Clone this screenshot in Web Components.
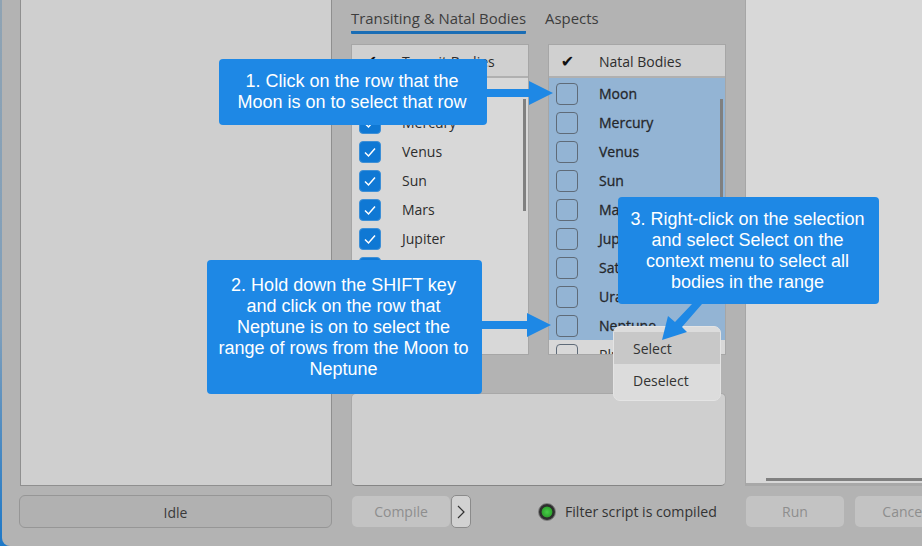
<!DOCTYPE html>
<html>
<head>
<meta charset="utf-8">
<style>
    html, body { margin: 0; height: 100%; overflow: hidden; background: #1d6fc0; }
    body { font: 14px "Open Sans", "Liberation Sans", sans-serif; color: #333; }
</style>
</head>
<body>
<app-window>
    <side-panel slot="left"></side-panel>
    <status-button slot="left">Idle</status-button>

    <tab-strip slot="middle" active="Transiting &amp; Natal Bodies" other="Aspects"></tab-strip>
    <body-list slot="middle" title="Transit Bodies" checked selected="0"></body-list>
    <body-list slot="middle" title="Natal Bodies" selected="9" second></body-list>
    <script-box slot="middle"></script-box>
    <flat-button slot="middle">Compile</flat-button>
    <chevron-button slot="middle"></chevron-button>
    <status-led slot="middle">Filter script is compiled</status-led>

    <side-panel slot="right" bar></side-panel>
    <flat-button slot="right">Run</flat-button>
    <flat-button slot="right">Cancel</flat-button>

    <context-menu slot="overlay" style="left:613px;top:326px"></context-menu>
    <call-out slot="overlay" style="left:219px;top:59px;width:268px;height:66px">1. Click on the row that the<br>Moon is on to select that row</call-out>
    <call-out slot="overlay" style="left:207px;top:260px;width:275px;height:134px">2. Hold down the SHIFT key<br>and click on the row that<br>Neptune is on to select the<br>range of rows from the Moon to<br>Neptune</call-out>
    <call-out slot="overlay" style="left:618px;top:197px;width:261px;height:107px">3. Right-click on the selection<br>and select Select on the<br>context menu to select all<br>bodies in the range</call-out>
    <arrow-layer slot="overlay"></arrow-layer>
</app-window>

<script>
const BODIES = ['Moon', 'Mercury', 'Venus', 'Sun', 'Mars', 'Jupiter', 'Saturn', 'Uranus', 'Neptune', 'Pluto'];

// small helper so each element only has to give its markup
class ShadowElement extends HTMLElement {
    constructor(markup) {
        super();
        this.attachShadow({ mode: 'open' });
        this.shadowRoot.innerHTML = markup;
    }
}

class AppWindow extends ShadowElement {
    constructor() {
        super(`
        <style>
        :host { display: block; position: relative; height: 546px; overflow: hidden;
                background: linear-gradient(#8fa3b3 0, #7f9fbb 60%, #1d78c8 100%); }
        .window { height: 100%; margin-left: 2px; background: #b3b3b3; border-bottom-left-radius: 8px; overflow: hidden; }
        .grid { display: grid; grid-template-columns: 312px 375px 300px; column-gap: 19px; height: 100%;
                padding-left: 18px; box-sizing: border-box; }
        .left { display: grid; grid-template-rows: 486px 33px; row-gap: 9px; align-content: start; }
        </style>
        <div class="window">
            <div class="grid">
                <div class="left"><slot name="left"></slot></div>
                <middle-column><slot name="middle"></slot></middle-column>
                <right-column><slot name="right"></slot></right-column>
            </div>
        </div>
        <slot name="overlay"></slot>`);
    }
}

class MiddleColumn extends ShadowElement {
    constructor() {
        super(`
        <style>
        :host { display: grid; grid-template-columns: 178px 19px 178px; grid-template-rows: 44px 311px 38px 93px 9px 33px;
                width: 375px; align-content: start; }
        </style>
        <slot></slot>`);
    }
}

class RightColumn extends ShadowElement {
    constructor() {
        super(`
        <style>
        :host { display: flex; flex-wrap: wrap; align-content: flex-start; column-gap: 10px; row-gap: 10px; width: 300px; }
        </style>
        <slot></slot>`);
    }
}

class SidePanel extends ShadowElement {
    constructor() {
        super(`
        <style>
        :host { display: block; position: relative; height: 486px; box-sizing: border-box; background: #cfcfcf;
                border: 1px solid #8f8f8f; border-top: 0; }
        :host([slot=right]) { flex-basis: 100%; background: #d8d8d8; border: 0; border-left: 1px solid #a6a6a6;
                border-bottom: 3px solid #a8a8a8; }
        .bar { position: absolute; left: 20px; right: 0; bottom: 2px; height: 3px; background: #808080; }
        </style>
        <div class="bar" hidden></div>`);
    }
    connectedCallback() {
        if (this.hasAttribute('bar')) this.shadowRoot.querySelector('.bar').hidden = false;
    }
}

class StatusButton extends ShadowElement {
    constructor() {
        super(`
        <style>
        :host { display: flex; align-items: center; justify-content: center; height: 33px; margin-left: -1px; box-sizing: border-box;
                padding-top: 1px; border: 1px solid #969696; border-radius: 6px; background: #b1b1b1; color: #3a3a3a; }
        </style>
        <slot></slot>`);
    }
}

class TabStrip extends ShadowElement {
    constructor() {
        super(`
        <style>
        :host { display: flex; grid-column: 1 / -1; gap: 19px; height: 44px; box-sizing: border-box; align-items: flex-start;
                color: #3d3d3d; font-size: 14.9px; }
        .tab { height: 34px; line-height: 37px; white-space: nowrap; box-sizing: border-box; }
        .on { border-bottom: 3px solid #1a6db5; border-radius: 1px; }
        </style>
        <div class="tab on"></div><div class="tab off"></div>`);
    }
    connectedCallback() {
        this.shadowRoot.querySelector('.on').textContent = this.getAttribute('active');
        this.shadowRoot.querySelector('.off').textContent = this.getAttribute('other');
    }
}

class BodyList extends ShadowElement {
    constructor() {
        super(`
        <style>
        :host { display: flex; flex-direction: column; position: relative; width: 178px; height: 311px; box-sizing: border-box;
                border: 1px solid #a6a6a6; background: #d8d8d8; overflow: hidden; color: #2d2d2d; }
        :host([second]) { grid-column: 3; }
        .head { display: flex; align-items: center; flex: 0 0 33px; padding-top: 1px; background: #d0d0d0; border-bottom: 2px solid #b0b0b0; box-sizing: border-box; height: 33px; }
        .tick { width: 37px; margin-right: 13px; text-align: center; font: 16px "DejaVu Sans", sans-serif; color: #111; }
        .row { display: flex; align-items: center; height: 29px; padding-left: 7px; box-sizing: border-box; }
        .row:first-child { height: 30px; padding-top: 1px; }
        .row.sel { background: #93b4d4; -webkit-text-stroke: 0.3px #25272b; color: #25272b; }
        .box { flex: none; width: 22px; height: 22px; box-sizing: border-box; border-radius: 4px; margin-right: 21px;
               border: 1.5px solid #5f6b78; display: flex; align-items: center; justify-content: center; }
        .box.on { background: #0f78d4; border: 1px solid #3d8fd6; }
        .sb { position: absolute; right: 2px; top: 54px; width: 3px; height: 112px; background: #808080; }
        </style>
        <div class="head"><div class="tick">&#10004;</div><div class="ttl"></div></div>
        <div class="rows"></div>
        <div class="sb"></div>`);
    }
    connectedCallback() {
        this.shadowRoot.querySelector('.ttl').textContent = this.getAttribute('title');
        const checked = this.hasAttribute('checked');
        const selected = Number(this.getAttribute('selected'));
        const tick = '<svg width="14" height="12" viewBox="0 0 14 12"><path d="M2 6.5 5.5 10 12 2.5" fill="none" stroke="#fff" stroke-width="1.5"/></svg>';
        this.shadowRoot.querySelector('.rows').innerHTML = BODIES.map((name, i) => `
            <div class="row ${i < selected ? 'sel' : ''}">
                <div class="box ${checked ? 'on' : ''}">${checked ? tick : ''}</div>${name}
            </div>`).join('');
    }
}

class ScriptBox extends ShadowElement {
    constructor() {
        super(`
        <style>
        :host { display: block; grid-column: 1 / -1; grid-row: 4; box-sizing: border-box; background: #cfcfcf;
                border: 1px solid #a8a8a8; border-bottom-color: #858585; border-radius: 5px; }
        </style>`);
    }
}

class FlatButton extends ShadowElement {
    constructor() {
        super(`
        <style>
        :host { display: flex; align-items: center; justify-content: center; width: 98px; height: 31px; box-sizing: border-box;
                background: #c3c3c3; color: #8e8e8e; border-radius: 5px; margin-left: 1px; }
        :host([slot=middle]) { grid-row: 6; grid-column: 1; margin-top: 1px; }
        </style>
        <slot></slot>`);
    }
}

class ChevronButton extends ShadowElement {
    constructor() {
        super(`
        <style>
        :host { display: flex; align-items: center; justify-content: center; grid-row: 6; grid-column: 1; justify-self: start;
                margin-left: 100px; width: 20px; height: 33px; box-sizing: border-box; background: #d2d2d2;
                border: 1px solid #8b8b8b; border-radius: 5px; }
        </style>
        <svg width="8" height="14" viewBox="0 0 8 14"><path d="M1 1 7 7 1 13" fill="none" stroke="#333" stroke-width="1.2"/></svg>`);
    }
}

class StatusLed extends ShadowElement {
    constructor() {
        super(`
        <style>
        :host { display: flex; align-items: center; grid-row: 6; grid-column: 2 / -1; margin-left: 9px; gap: 9px; color: #333;
                white-space: nowrap; font-size: 14.15px; }
        .led { width: 18px; height: 18px; box-sizing: border-box; border-radius: 50%; border: 1.5px solid #7d7d7d;
               background: radial-gradient(circle 8px at 50% 50%, #47cf47 0, #2fa32f 5px, #2b2b2b 5.8px, #333 8px); }
        </style>
        <div class="led"></div><slot></slot>`);
    }
}

class ContextMenu extends ShadowElement {
    constructor() {
        super(`
        <style>
        :host { display: block; position: absolute; width: 108px; height: 75px; box-sizing: border-box; padding-top: 5px;
                background: #dcdcdc; border: 1px solid #e4e4e4; border-radius: 7px; color: #333; }
        .item { height: 32px; line-height: 33px; padding-left: 19px; }
        .hot { background: #c8c8c8; }
        </style>
        <div class="item hot">Select</div><div class="item">Deselect</div>`);
    }
}

class CallOut extends ShadowElement {
    constructor() {
        super(`
        <style>
        :host { display: flex; align-items: center; justify-content: center; position: absolute; box-sizing: border-box; text-align: center;
                padding-right: 2px; background: #1e88e5; color: #fff; border-radius: 4px;
                font: 18px/21px "Liberation Sans", Arial, sans-serif; white-space: nowrap; }
        </style>
        <div><slot></slot></div>`);
    }
}

// the three arrows run across the other panels, so they get their own layer
class ArrowLayer extends ShadowElement {
    constructor() {
        super(`
        <style>
        :host { display: block; position: absolute; left: 0; top: 0; pointer-events: none; }
        svg { display: block; }
        </style>
        <svg width="922" height="546" viewBox="0 0 922 546" fill="#1e88e5">
            <path d="M487 89H529V81L553 93 529 105V97H487Z"/>
            <path d="M482 321H527V313L551 325 527 337V329H482Z"/>
            <path d="M692 304H702L682 327 687 332 662 340 668 316 675 322Z"/>
        </svg>`);
    }
}

customElements.define('app-window', AppWindow);
customElements.define('middle-column', MiddleColumn);
customElements.define('right-column', RightColumn);
customElements.define('side-panel', SidePanel);
customElements.define('status-button', StatusButton);
customElements.define('tab-strip', TabStrip);
customElements.define('body-list', BodyList);
customElements.define('script-box', ScriptBox);
customElements.define('flat-button', FlatButton);
customElements.define('chevron-button', ChevronButton);
customElements.define('status-led', StatusLed);
customElements.define('context-menu', ContextMenu);
customElements.define('call-out', CallOut);
customElements.define('arrow-layer', ArrowLayer);
</script>
</body>
</html>
